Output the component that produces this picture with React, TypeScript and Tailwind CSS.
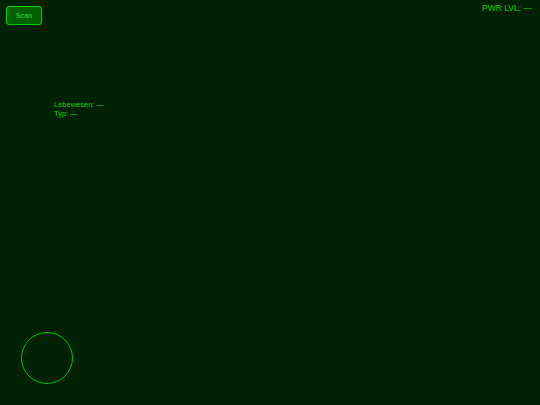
import React from "react";

export default function App() {
  return (
    <div
      className="relative w-full h-[405px] overflow-hidden bg-[#002200] text-[#00cc00]"
      style={{ fontFamily: '"Liberation Sans", Arial, sans-serif' }}
    >
      <button className="absolute top-[6px] left-[6px] w-[36px] h-[19px] rounded-[3px] border border-[#00cc00] bg-[#006000] text-[7px] font-bold leading-none text-[#22bb22] flex items-center justify-center">
        Scan
      </button>

      <div className="absolute top-[3px] right-[8px] text-[8.5px] leading-[11px] text-[#00cc00]">
        PWR LVL: —
      </div>

      <div className="absolute top-[100px] left-[54px] text-[7.5px] leading-[9px] text-[#00cc00]">
        <div>Lebewesen: —</div>
        <div>Typ: —</div>
      </div>

      <div className="absolute left-[21px] bottom-[21px] w-[52px] h-[52px] rounded-full border border-[#00bb00]" />
    </div>
  );
}
